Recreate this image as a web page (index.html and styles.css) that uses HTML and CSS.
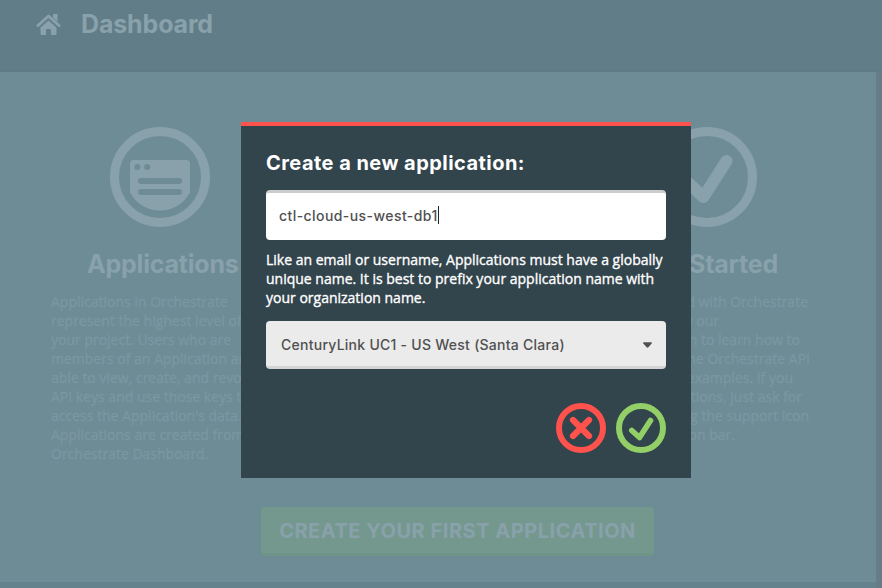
FILE: index.html
```
<!DOCTYPE html>
<html lang="en">
<head>
<meta charset="utf-8">
<title>Dashboard</title>
<link rel="stylesheet" href="styles.css">
</head>
<body>
<div class="page">
  <header class="topbar">
    <svg class="home" viewBox="0 0 24 22"><path d="M1.5 11.5 12 2l10.500 9.500" fill="none" stroke="currentColor" stroke-width="3" stroke-linecap="round" stroke-linejoin="round"/><path d="M16.500 0H21v7.500l-4.500-4zM12 6.500l8 7V20q0 1-1 1h-4.500v-5q0-1-1-1h-3q-1 0-1 1v5H5q-1 0-1-1v-6.500z" fill="currentColor"/></svg>
    <h1 class="title">Dashboard</h1>
  </header>
  <main class="content">
    <div class="columns">
      <section class="column">
        <svg class="badge" viewBox="0 0 100 100"><circle cx="50" cy="50" r="45.500" fill="none" stroke="currentColor" stroke-width="9"/><path d="M24 33h52q4 0 4 4v28.500a34 34 0 0 1-60 0V37q0-4 4-4z" fill="currentColor"/><g class="cut"><circle cx="27.300" cy="40" r="3.100"/><circle cx="37.200" cy="40" r="3.100"/><rect x="28" y="51" width="44" height="6" rx="3"/><rect x="28" y="62" width="44" height="6" rx="3"/></g></svg>
        <h2 class="heading heading-apps"><span>Applications</span></h2>
        <p class="blurb">Applications in Orchestrate<br>represent the highest level of<br>your project. Users who are<br>members of an Application are<br>able to view, create, and revoke<br>API keys and use those keys to<br>access the Application's data.<br>Applications are created from the<br>Orchestrate Dashboard.</p>
      </section>
      <section class="column">
        <svg class="badge" viewBox="0 0 100 100"><circle cx="50" cy="50" r="45.500" fill="none" stroke="currentColor" stroke-width="9"/><path d="M28 53l18.500 17L69.500 34" fill="none" stroke="currentColor" stroke-width="12" stroke-linecap="round" stroke-linejoin="round"/></svg>
        <h2 class="heading heading-start"><span>Get Started</span></h2>
        <p class="blurb guide">
          <span style="width:210px">Getting started with Orchestrate</span>
          <span style="width:121px">is easy. View our</span>
          <span style="width:202px">documentation to learn how to</span>
          <span style="width:212px">start using the Orchestrate API</span>
          <span style="width:195px">with code examples. If you</span>
          <span style="width:204px">have questions, just ask for</span>
          <span style="width:211px">help by using the support icon</span>
          <span style="width:137px">in the action bar.</span>
        </p>
      </section>
    </div>
    <button class="create"><span>CREATE YOUR FIRST APPLICATION</span></button>
  </main>
</div>
<div class="modal">
  <h2 class="modal-title">Create a new application:</h2>
  <div class="input"><span>ctl-cloud-us-west-db1</span><i class="caret"></i></div>
  <p class="help">Like an email or username, Applications must have a globally<br>unique name. It is best to prefix your application name with<br>your organization name.</p>
  <div class="select"><span>CenturyLink UC1 - US West (Santa Clara)</span><svg class="arrow" viewBox="0 0 8 5"><path d="M.7 0h6.600q1 .4.4 1.200L4.800 4.600q-.8.700-1.600 0L.3 1.200Q-.3.400.7 0z" fill="currentColor"/></svg></div>
  <div class="actions">
    <svg class="cancel" viewBox="0 0 50 50"><circle cx="25" cy="25" r="22" fill="none" stroke="currentColor" stroke-width="6"/><path d="M17 17l16 16M33 17L17 33" stroke="currentColor" stroke-width="6.200" stroke-linecap="round"/></svg>
    <svg class="confirm" viewBox="0 0 50 50"><circle cx="25" cy="25" r="22" fill="none" stroke="currentColor" stroke-width="6"/><path d="M15.800 27.500l7.700 7L34.500 17.500" fill="none" stroke="currentColor" stroke-width="5.600" stroke-linecap="round" stroke-linejoin="round"/></svg>
  </div>
</div>
</body>
</html>
```
FILE: styles.css
```
* { box-sizing: border-box; }
body {
  margin: 0;
  height: 588px;
  overflow: hidden;
  background: #64828d;
  font-family: "Open Sans", sans-serif;
}
h1, h2, p { margin: 0; }
svg { display: block; flex: none; }
.page {
  height: 582px;
  width: 882px;
  background: #6e8c96;
  display: grid;
  grid-template: 72px 510px / 876px 6px;
}
.page::after {
  content: "";
  grid-column: 2;
  grid-row: 2;
  height: 516px;
  background: #667d87;
}
.topbar {
  grid-column: 1 / 3;
  background: #617d87;
  border-bottom: 2px solid #5f7b85;
  display: flex;
  padding: 14px 0 0 36px;
  color: #89a1ab;
}
.home { width: 25px; height: 22px; }
.title, .heading, .create, .modal-title, .input, .select {
  font-family: Inter, sans-serif;
  white-space: nowrap;
}
.title {
  margin-left: 20px;
  margin-top: -5px;
  font-size: 25px;
  font-weight: 700;
  line-height: 30px;
  letter-spacing: -0.15px;
}
.content { color: #89a1ab; }
.columns {
  display: flex;
  gap: 329px;
  padding: 55px 0 0 51px;
  height: 435px;
}
.column { width: 218px; flex: none; }
.badge { width: 100px; height: 100px; margin-left: 59px; }
.cut { fill: #6e8c96; }
.heading {
  margin-top: 21px;
  font-size: 25px;
  font-weight: 700;
  line-height: 32px;
}
.heading-apps { padding-left: 36px; letter-spacing: -0.2px; }
.heading-start { width: 180px; text-align: right; letter-spacing: -0.2px; }
.blurb {
  margin-top: 12px;
  color: #7b97a1;
  font-size: 14px;
  line-height: 19px;
  white-space: nowrap;
  -webkit-text-stroke: 0.3px currentColor;
}
.guide span { display: flex; justify-content: flex-end; }
.create {
  display: flex;
  align-items: center;
  justify-content: center;
  width: 393px;
  height: 49px;
  margin-left: 261px;
  padding: 1px 0 0;
  border: 0;
  border-bottom: 3px solid #6f9588;
  border-radius: 4px;
  background: #74988e;
  color: #89a1ab;
  font-size: 20px;
  font-weight: 700;
  letter-spacing: 0.52px;
}
.modal {
  position: absolute;
  left: 241px;
  top: 122px;
  width: 450px;
  height: 356px;
  padding: 23px 25px 0;
  border-top: 4px solid #ff524d;
  background: #32444c;
  color: #fff;
}
.modal-title {
  font-size: 20px;
  font-weight: 700;
  line-height: 28px;
  letter-spacing: 0.46px;
}
.input {
  display: flex;
  align-items: center;
  height: 50px;
  margin-top: 13px;
  padding: 0 0 3px 13px;
  border-top: 3px solid #ccc;
  border-radius: 4px;
  background: #fff;
  color: #505050;
  font-size: 14px;
  font-weight: 500;
  letter-spacing: 0.43px;
}
.caret { width: 1px; height: 18px; background: #222; }
.help {
  margin-top: 10px;
  font-size: 14px;
  line-height: 19px;
  white-space: nowrap;
  -webkit-text-stroke: 0.35px currentColor;
}
.select {
  display: flex;
  align-items: center;
  justify-content: space-between;
  height: 48px;
  margin-top: 14px;
  padding: 2px 14px 0 15px;
  border-bottom: 3px solid #d4d4d4;
  border-radius: 4px;
  background: #ebebeb;
  color: #505050;
  font-size: 14px;
  font-weight: 500;
  letter-spacing: 0.26px;
}
.arrow { width: 9px; height: 6px; }
.actions {
  display: flex;
  justify-content: flex-end;
  gap: 10px;
  margin-top: 34px;
}
.actions svg { width: 50px; height: 50px; }
.cancel { color: #ff524d; }
.confirm { color: #92cf67; }
```
